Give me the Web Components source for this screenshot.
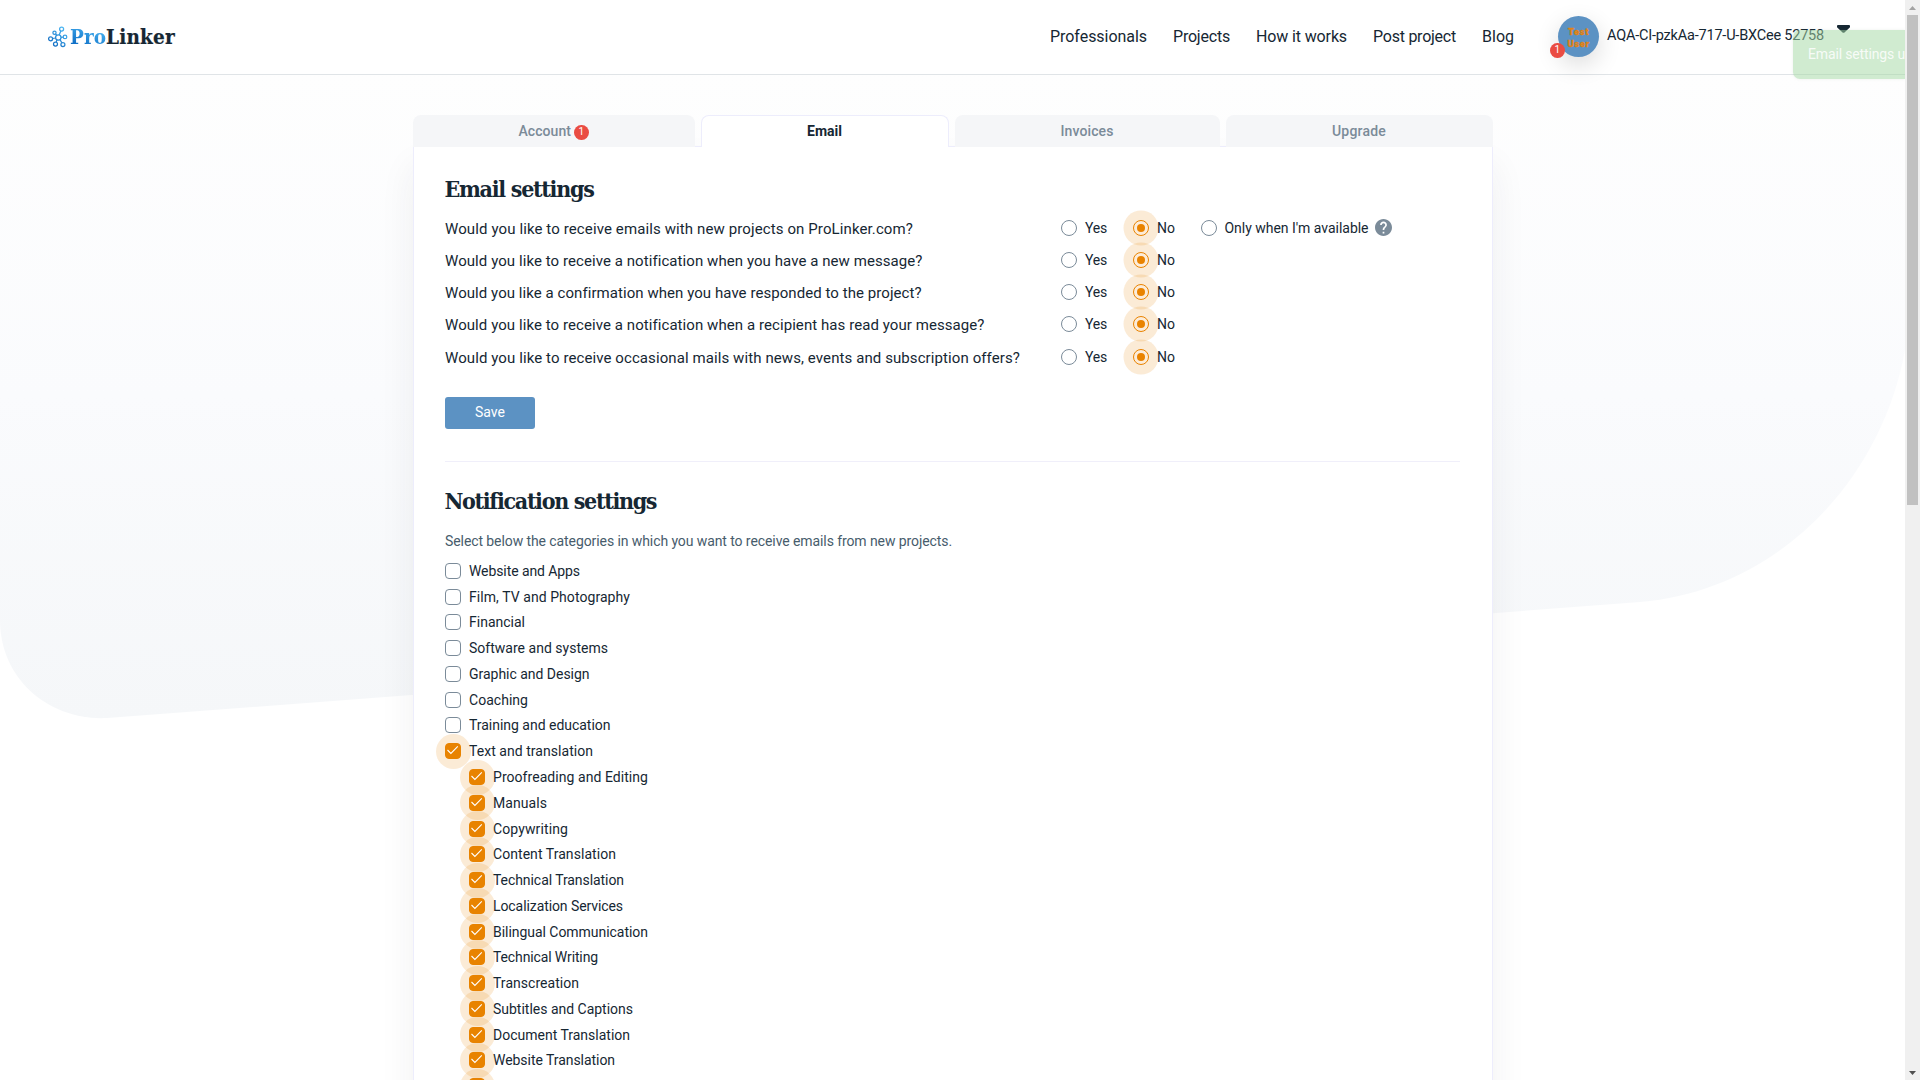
<!DOCTYPE html>
<html lang="en"><head><meta charset="utf-8"><title>ProLinker</title>
<style>
html,body{margin:0;height:1080px;overflow:hidden;background:#fff;font-family:Roboto,"Liberation Sans",sans-serif;color:#162733}
</style></head><body>
<pl-page></pl-page>
<script>
const define=(name,css,html,setup)=>customElements.define(name,class extends HTMLElement{
  connectedCallback(){
    if(this.shadowRoot)return;
    const r=this.attachShadow({mode:'open'});
    r.innerHTML='<style>*{box-sizing:border-box}'+css+'</style>'+(typeof html==='function'?html(this):html);
    if(setup)setup(this,r);
  }
});
/* Text whose advance is spread evenly over a given width */
define('pl-fit',':host{display:inline-block;white-space:nowrap}','<slot></slot>',el=>{
  const w=+el.getAttribute('w'),n=el.textContent.length;
  if(!n)return;
  el.style.letterSpacing=((w-el.getBoundingClientRect().width)/n).toFixed(3)+'px';
  el.style.width=w+'px';
});
define('pl-logo',`:host{display:flex;align-items:center;height:30px;gap:2px}
svg{display:block}
.t{display:flex;font:bold 20.5px/30px "Roboto Slab","DejaVu Serif Condensed","DejaVu Serif",serif;-webkit-text-stroke:.2px}
.p{background:linear-gradient(20deg,#0d6cc4 20%,#48b4f2 80%);-webkit-background-clip:text;color:transparent;-webkit-text-stroke:0}`,
`<svg width="20" height="22" viewBox="0 0 20 22" fill="none" stroke="url(#g)" stroke-width="1.25"><defs><linearGradient id="g" gradientUnits="userSpaceOnUse" x1="2" y1="20" x2="17" y2="2"><stop stop-color="#0c65bd"/><stop offset="1" stop-color="#4cb8f4"/></linearGradient></defs>
<circle cx="10.3" cy="11.5" r="2.7"/><circle cx="13.6" cy="3" r="2"/><circle cx="6.5" cy="6.7" r="1.6"/><circle cx="2.6" cy="12.8" r="2"/><circle cx="7.5" cy="18" r="2"/><circle cx="14.9" cy="18.5" r="2"/><circle cx="17" cy="10.9" r="1.8"/><path d="M11.2 9l1.6-4.1M8.7 9.2l-1.2-1.3M7.6 12l-3 .5M9 13.8l-.8 2.3M12 13.6l1.8 3.2M13 11.3l2.2-.2"/></svg>
<div class="t"><span class="p"><pl-fit w="36">Pro</pl-fit></span><pl-fit w="69">Linker</pl-fit></div>`);
define('pl-badge',`:host{display:inline-flex;width:14.5px;height:15px;border-radius:50%;background:#ea4c43;color:#fff;font-size:10px;font-weight:400;line-height:14px;justify-content:center}`,'<slot></slot>');
define('pl-user',`:host{display:flex;height:74px;font-size:14.5px;line-height:20px}
.av{position:relative;width:41px;height:41px;margin-top:16px}
.c{width:41px;height:41px;border-radius:50%;background:#5c92c3;box-shadow:0 8px 24px rgba(0,0,0,.14);color:#e08214;font:900 9.5px/12px Roboto;text-align:center;padding-top:10px;-webkit-text-stroke:.3px}
pl-badge{position:absolute;left:-8px;top:27px}
.n{margin:26px 0 0 8px}svg{margin:25px 0 0 13px}`,
`<div class="av"><div class="c"><pl-fit w="21">Test</pl-fit><pl-fit w="22">User</pl-fit></div><pl-badge>1</pl-badge></div><pl-fit class="n" w="217">AQA-CI-pzkAa-717-U-BXCee 52758</pl-fit><svg width="13" height="8" viewBox="0 0 13 8"><path d="M1 0h11q1 0 1 1v1.2L7.5 7.4q-1 .8-2 0L0 2.2V1q0-1 1-1z" fill="#162733"/></svg>`);
define('pl-header',`:host{display:flex;position:relative;height:75px;background:#fff;border-bottom:1px solid #e0e4e7;padding-left:48px}
pl-logo{margin-top:22px;width:127px}
nav{display:flex;margin-left:875px;width:508px;gap:26px;padding-top:26px;font-size:16px;line-height:21px}`,
`<pl-logo></pl-logo><nav><pl-fit w="97">Professionals</pl-fit><pl-fit w="57">Projects</pl-fit><pl-fit w="91">How it works</pl-fit><pl-fit w="83">Post project</pl-fit><pl-fit w="32">Blog</pl-fit></nav><pl-user></pl-user>`);
define('pl-tab',`:host{display:flex;height:32px;align-items:flex-start;justify-content:center;gap:3px;border-radius:8px 8px 0 0;background:#f5f6f8;color:#7b8b99;font-size:14px;font-weight:500;line-height:32px}
:host([active]){background:#fff;border:1px solid #ededfc;border-bottom:0;color:#162733;font-weight:700;line-height:30px}
::slotted(pl-badge){margin-top:10px}`,'<slot></slot>');
define('pl-radio',`:host{display:flex;align-items:center;gap:8px;font-size:14px;line-height:18px}
.o{position:relative;width:16px;height:16px;border:1px solid #7b8b99;border-radius:50%;background:#fff}
:host([on]) .o{border-color:#e98300;box-shadow:0 0 0 9.5px rgba(233,131,0,.16);background:#fcecd9}
:host([on]) .o::after{content:"";position:absolute;inset:3px;border-radius:50%;background:#e98300}
slot{display:block}`,'<span class="o"></span><slot></slot>');
define('pl-question',`:host{display:flex;height:32px;align-items:center}
:host(:last-child){padding-top:1px;height:33px}
.q{width:616px;font-size:15px}.o{display:flex;align-items:center;margin-top:-2px}
.n{margin-left:26px}.a{margin-left:25.5px}svg{margin:-2px 0 0 6px}`,
el=>`<div class="q"><pl-fit w="${el.getAttribute('w')}">${el.getAttribute('text')}</pl-fit></div><div class="o"><pl-radio><pl-fit w="22">Yes</pl-fit></pl-radio><pl-radio class="n" on><pl-fit w="18">No</pl-fit></pl-radio>${el.hasAttribute('available')?`<pl-radio class="a"><pl-fit w="144">Only when I'm available</pl-fit></pl-radio><svg width="17" height="17" viewBox="2 2 20 20"><path fill="#7b8b99" d="M12 2C6.48 2 2 6.48 2 12s4.48 10 10 10 10-4.48 10-10S17.52 2 12 2zm1 17h-2v-2h2v2zm2.07-7.75-.9.92C13.45 12.9 13 13.5 13 15h-2v-.5c0-1.1.45-2.1 1.17-2.83l1.24-1.26c.37-.36.59-.86.59-1.41 0-1.1-.9-2-2-2s-2 .9-2 2H8c0-2.21 1.79-4 4-4s4 1.79 4 4c0 .88-.36 1.68-.93 2.25z"/></svg>`:''}</div>`);
define('pl-check',`:host{display:flex;align-items:center;height:25.78px;gap:8px;font-size:14px}
.b{position:relative;flex:none;width:16px;height:16px;border:1px solid #7b8b99;border-radius:4px;background:#fff}
:host([sub]){padding-left:24px}
:host([on]) .b{border-color:#e98300;background:#e98300}
:host([on]) .b::before{content:"";position:absolute;left:-10.5px;top:-10.5px;width:35px;height:35px;border-radius:50%;background:rgba(233,131,0,.16)}
svg{display:none;position:absolute;left:0;top:-1px}:host([on]) svg{display:block}`,
`<span class="b"><svg width="14" height="14" viewBox="0 0 14 14" fill="none" stroke="#fff" stroke-width="1.1"><path d="M1.5 7l3.4 3.4L11.8 3.4"/></svg></span><slot></slot>`);
define('pl-h','span{display:block}:host{display:block;margin-left:-.5px;font:bold 23px/32px "Roboto Slab","DejaVu Serif Condensed","DejaVu Serif",serif}','<slot></slot>');
define('pl-settings',`:host{display:block;width:1080px}
.tabs{display:flex;gap:6px;height:32px;position:relative}
.panel{height:1000px;background:#fff;border:1px solid #ededfc;margin-top:-1px;padding:26px 32px 0 31.5px;box-shadow:0 20px 34px rgba(40,50,60,.065)}
.qs{margin-top:8px}.save{display:flex;width:90px;height:32px;margin-top:23px;border-radius:3px;background:#5c92c3;color:#fff;font-size:14px;justify-content:center;line-height:31px}
hr{border:0;height:1px;background:#f0effa;margin:32px 0 23px}
.d{margin:14px 0 7px;height:20px;font-size:14px;line-height:20px;color:#475c6c}`,
()=>{
 const item=([t,w],a)=>`<pl-check ${a}>${`<pl-fit w="${w}">${t}</pl-fit>`}</pl-check>`;
 const top=[['Website and Apps',111],['Film, TV and Photography',161],['Financial',56],['Software and systems',139],['Graphic and Design',120.5],['Coaching',59],['Training and education',141.5]];
 const sub=[['Proofreading and Editing',155],['Manuals',54],['Copywriting',75],['Content Translation',123],['Technical Translation',131],['Localization Services',130],['Bilingual Communication',155],['Technical Writing',105],['Transcreation',86],['Subtitles and Captions',140],['Document Translation',137],['Website Translation',122],['',0]];
 return `<div class="tabs"><pl-tab style="width:282px"><pl-fit w="52.5">Account</pl-fit><pl-badge>1</pl-badge></pl-tab><pl-tab active style="width:248px">Email</pl-tab><pl-tab style="width:265px"><pl-fit w="53">Invoices</pl-fit></pl-tab><pl-tab style="width:267px"><pl-fit w="54">Upgrade</pl-fit></pl-tab></div>
<div class="panel"><pl-h><pl-fit w="149">Email settings</pl-fit></pl-h>
<div class="qs"><pl-question available w="468" text="Would you like to receive emails with new projects on ProLinker.com?"></pl-question><pl-question w="477" text="Would you like to receive a notification when you have a new message?"></pl-question><pl-question w="476" text="Would you like a confirmation when you have responded to the project?"></pl-question><pl-question w="539" text="Would you like to receive a notification when a recipient has read your message?"></pl-question><pl-question w="575" text="Would you like to receive occasional mails with news, events and subscription offers?"></pl-question></div>
<div class="save"><pl-fit w="30">Save</pl-fit></div><hr><pl-h><pl-fit w="210">Notification settings</pl-fit></pl-h>
<div class="d"><pl-fit w="507">Select below the categories in which you want to receive emails from new projects.</pl-fit></div>
${top.map(i=>item(i,'')).join('')}${item(['Text and translation',124],'on')}${sub.map(i=>item(i,'on sub')).join('')}</div>`});
define('pl-toast',`:host{display:block;width:112px;height:49px;border-radius:7px 0 0 7px;background:rgba(164,217,164,.52);box-shadow:0 0 3px rgba(120,150,120,.15);color:rgba(255,255,255,.85);font-size:14px;line-height:49px;padding-left:15px;box-sizing:border-box;white-space:nowrap}`,'<pl-fit w="97">Email settings u</pl-fit>');
define('pl-scrollbar',`:host{display:flex;flex-direction:column;width:15px;height:1080px;background:#f0f0f0;align-items:center}
svg{display:block}i{width:11px;height:490px;background:#c1c1c1}.g{flex:1}`,
`<svg width="15" height="15"><path d="M4 10h7L7.5 6z" fill="#a3a3a3"/></svg><i></i><span class="g"></span><svg width="15" height="15"><path d="M4 6h7L7.5 10z" fill="#505050"/></svg>`);
define('pl-page',`:host{display:flex;width:1920px;height:1080px;overflow:hidden}
.v{position:relative;width:1905px;height:1080px;overflow:hidden}
.bg{position:absolute;left:0;top:0}
pl-settings{position:relative;margin:40px auto 0}
pl-toast{position:absolute;left:1793px;top:30px}`,
`<div class="v"><svg class="bg" width="1905" height="760"><defs><linearGradient id="b" x1="0" y1="0" x2="0" y2="1"><stop offset=".1" stop-color="#fefefe"/><stop offset=".55" stop-color="#fafbfd"/><stop offset="1" stop-color="#f5f7f9"/></linearGradient></defs><path d="M0 0H1905V350C1882 478 1780 590 1640 602L107 718C50 721 0 680 0 620Z" fill="url(#b)"/></svg><pl-header></pl-header><pl-settings></pl-settings><pl-toast></pl-toast></div><pl-scrollbar></pl-scrollbar>`);
</script></body></html>
